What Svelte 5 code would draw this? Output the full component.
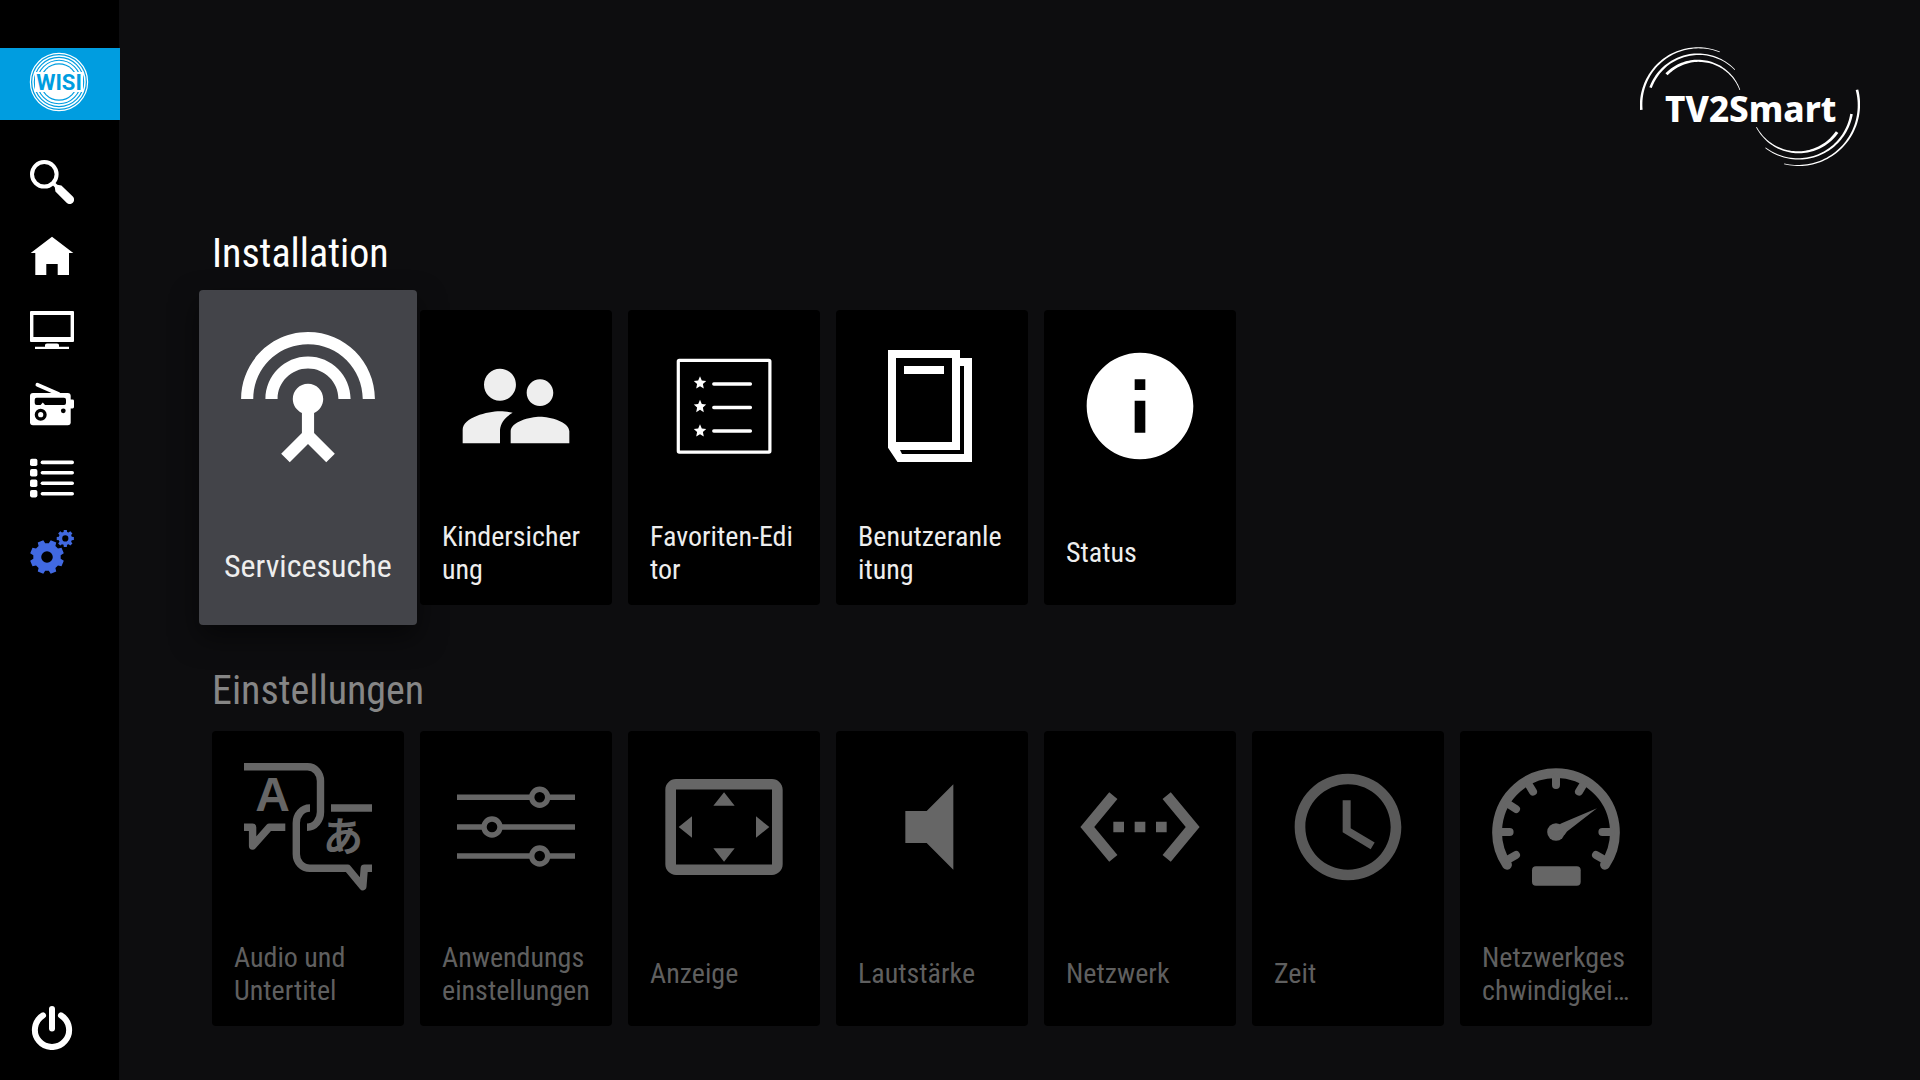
<script lang="ts">
  type Shape = {
    d?: string;
    box?: number;
  };

  type Tile = {
    id: string;
    label: string;
    focused?: boolean;
    soft?: boolean;
    icon?: Shape;
  };

  const installation: Tile[] = [
    {
      id: 'scan',
      label: 'Servicesuche',
      focused: true,
      icon: {
        d: 'M12 5c-3.87 0-7 3.13-7 7h2c0-2.76 2.24-5 5-5s5 2.24 5 5h2c0-3.87-3.13-7-7-7zm1 9.29c.88-.39 1.5-1.26 1.5-2.29 0-1.38-1.12-2.5-2.5-2.5S9.5 10.62 9.5 12c0 1.02.62 1.9 1.5 2.29v3.3L7.59 21 9 22.41l3-3 3 3L16.41 21 13 17.59v-3.3zM12 1C5.93 1 1 5.93 1 12h2c0-4.97 4.03-9 9-9s9 4.03 9 9h2c0-6.07-4.93-11-11-11z',
      },
    },
    {
      id: 'parental',
      label: 'Kindersicher\nung',
      soft: true,
      icon: {
        d: 'M16.5 12c1.38 0 2.49-1.12 2.49-2.5S17.88 7 16.5 7C15.12 7 14 8.12 14 9.5s1.12 2.5 2.5 2.5zM9 11c1.66 0 2.99-1.34 2.99-3S10.66 5 9 5C7.34 5 6 6.34 6 8s1.34 3 3 3zm7.5 3c-1.83 0-5.5.92-5.5 2.75V19h11v-2.25c0-1.83-3.67-2.75-5.5-2.75zM9 13c-2.33 0-7 1.17-7 3.5V19h7v-2.25c0-.85.33-2.34 2.37-3.47C10.5 13.1 9.66 13 9 13z',
      },
    },
    { id: 'favorites', label: 'Favoriten-Edi\ntor' },
    {
      id: 'manual',
      label: 'Benutzeranle\nitung',
      icon: {
        box: 128,
        d: 'M20 8H92V16H104V120H29.5L20 105.7ZM28 16V100H84V16ZM92 24V108H32L34 112H96V24ZM36 24H76V32H36Z',
      },
    },
    {
      id: 'status',
      label: 'Status',
      icon: {
        d: 'M12 2C6.48 2 2 6.48 2 12s4.48 10 10 10 10-4.48 10-10S17.52 2 12 2zm1 15h-2v-6h2v6zm0-8h-2V7h2v2z',
      },
    },
  ];

  const einstellungen: Tile[] = [
    { id: 'audio', label: 'Audio und\nUntertitel' },
    { id: 'app', label: 'Anwendungs\neinstellungen' },
    {
      id: 'display',
      label: 'Anzeige',
      icon: {
        d: 'M12.01 5.5L10 8h4l-1.99-2.5zM18 10v4l2.5-1.99L18 10zM6 10l-2.5 2.01L6 14v-4zm8 6h-4l2.01 2.5L14 16zm7-13H3c-1.1 0-2 .9-2 2v14c0 1.1.9 2 2 2h18c1.1 0 2-.9 2-2V5c0-1.1-.9-2-2-2zm0 16.01H3V4.99h18v14.02z',
      },
    },
    {
      id: 'volume',
      label: 'Lautstärke',
      icon: { d: 'M7 9v6h4l5 5V4l-5 5H7z' },
    },
    {
      id: 'network',
      label: 'Netzwerk',
      icon: {
        d: 'M7.77 6.76L6.23 5.48.82 12l5.41 6.52 1.54-1.28L3.42 12l4.35-5.24zM7 13h2v-2H7v2zm10-2h-2v2h2v-2zm-6 2h2v-2h-2v2zm6.77-7.52l-1.54 1.28L20.58 12l-4.35 5.24 1.54 1.28L23.18 12l-5.41-6.52z',
      },
    },
    {
      id: 'time',
      label: 'Zeit',
      soft: true,
      icon: {
        d: 'M11.99 2C6.47 2 2 6.48 2 12s4.47 10 9.99 10C17.52 22 22 17.52 22 12S17.52 2 11.99 2zM12 20c-4.42 0-8-3.58-8-8s3.58-8 8-8 8 3.58 8 8-3.58 8-8 8zm.5-13H11v6l5.25 3.15.75-1.23-4.5-2.67z',
      },
    },
    { id: 'speed', label: 'Netzwerkges\nchwindigkei…' },
  ];

  const polar = (cx: number, cy: number, r: number, deg: number) => {
    const a = (deg * Math.PI) / 180;
    return `${(cx + r * Math.cos(a)).toFixed(2)} ${(cy + r * Math.sin(a)).toFixed(2)}`;
  };

  // Arc whose stroke narrows from w0 at its start to w1 at its end.
  function taper(cx: number, cy: number, r: number, a0: number, a1: number, w0: number, w1: number) {
    const steps = 48;
    const outer: string[] = [];
    const inner: string[] = [];
    for (let i = 0; i <= steps; i++) {
      const t = i / steps;
      const a = a0 + (a1 - a0) * t;
      const w = (w0 + (w1 - w0) * t) / 2;
      outer.push(polar(cx, cy, r + w, a));
      inner.unshift(polar(cx, cy, r - w, a));
    }
    return `M${outer.join('L')}L${inner.join('L')}Z`;
  }

  // Eight-toothed gear with a round hole, filled with the even-odd rule.
  function gear(cx: number, cy: number, tip: number, root: number, hole: number, turn: number) {
    const pts: string[] = [];
    for (let i = 0; i < 8; i++) {
      const a = turn + i * 45;
      pts.push(
        polar(cx, cy, root, a - 15),
        polar(cx, cy, tip, a - 10),
        polar(cx, cy, tip, a + 10),
        polar(cx, cy, root, a + 15),
      );
    }
    return (
      `M${pts.join('L')}Z` +
      `M${cx - hole} ${cy}a${hole} ${hole} 0 1 0 ${hole * 2} 0a${hole} ${hole} 0 1 0 ${-hole * 2} 0Z`
    );
  }

  const swooshes = [
    taper(58.3, 59, 57.2, 175, 292, 2.6, 0.8),
    taper(58.3, 59, 50.8, 200, 316, 2.6, 0.8),
    taper(58.3, 59, 44.2, 224, 340, 3, 0.8),
    taper(158.3, 58.9, 60.6, -14.5, 103.5, 2.6, 0.8),
    taper(158.3, 58.9, 54, 9.7, 127.5, 2.6, 0.8),
    taper(158.3, 58.9, 47.4, 35, 152, 3, 0.8),
  ];

  const gears = gear(17, 27, 17.2, 13.8, 5.8, 22.5) + gear(35.3, 8.4, 8.7, 6.7, 3.1, 0);

  const star = 'M0-6.4L1.8-2.1 6.2-1.7 2.9 1.4 3.8 6 0 3.6-3.8 6-2.9 1.4-6.2-1.7-1.8-2.1Z';
</script>

{#snippet tile(t: Tile)}
  <button class="tile" class:focused={t.focused} type="button">
    <span class="art" class:soft={t.soft}>
      {#if t.icon}
        <svg viewBox="0 0 {t.icon.box ?? 24} {t.icon.box ?? 24}" aria-hidden="true">
          <path d={t.icon.d} fill="currentColor" fill-rule={t.icon.box ? 'evenodd' : 'nonzero'} />
        </svg>
      {:else if t.id === 'favorites'}
        <svg viewBox="0 0 128 128" aria-hidden="true" fill="currentColor">
          <rect x="18.3" y="18.3" width="91.6" height="91.8" rx="1" fill="none" stroke="currentColor" stroke-width="3.2" />
          <path d={star} transform="translate(40 40.6)" />
          <path d={star} transform="translate(40 64.2)" />
          <path d={star} transform="translate(40 88.6)" />
          <path d="M53.8 42H90.4M53.8 65.5H90.4M53.8 89H90.4" stroke="currentColor" stroke-width="3.4" stroke-linecap="round" />
        </svg>
      {:else if t.id === 'audio'}
        <svg viewBox="0 0 128 128" aria-hidden="true" fill="currentColor">
          <g fill="none" stroke="currentColor" stroke-width="7.4" stroke-linejoin="round">
            <path d="M0 3.8H63.5C71 3.8 76.5 10 76.5 18V49C76.5 57 71 64.3 63 64.3" />
            <path d="M66 45C58 45 52.3 52 52.3 60V91C52.3 99 58 105.3 66 105.3H103.7L118.8 123.6L120.3 105.3H128" />
            <path d="M87 45H128" />
            <path d="M0 64.3H8.6V83L25.3 64.3H41.3" />
          </g>
          <text class="latin" x="28.5" y="48" text-anchor="middle">A</text>
          <text class="kana" x="99" y="88" text-anchor="middle">あ</text>
        </svg>
      {:else if t.id === 'app'}
        <svg viewBox="0 0 128 128" aria-hidden="true" fill="none" stroke="currentColor" stroke-width="5.4">
          <path d="M5 34.3H79.7M95.7 34.3H123M5 64H32M48 64H123M5 93H79.7M95.7 93H123" />
          <circle cx="87.7" cy="34.3" r="8" />
          <circle cx="40" cy="64" r="8" />
          <circle cx="87.7" cy="93" r="8" />
        </svg>
      {:else if t.id === 'speed'}
        <svg viewBox="0 0 128 128" aria-hidden="true" fill="currentColor">
          <g fill="none" stroke="currentColor" stroke-linecap="round">
            <path d="M15 101.8A58.9 58.9 0 1 1 113 101.8" stroke-width="9.8" />
            <path
              d="M64 14V22M37 22L41 28.6M91 22L87 28.6M17 41.5L24 46M9 69H17.6M17 96L24 92M119 69H110.4M111 96L104 92"
              stroke-width="8"
            />
          </g>
          <circle cx="64" cy="69" r="8.8" />
          <path d="M105 45.2L69 60.4Q66 62 66 68L72.5 72L75 68.6Z" />
          <rect x="40" y="103.3" width="48.7" height="19.4" rx="4" />
        </svg>
      {/if}
    </span>
    <span class="label"><span>{t.label}</span></span>
  </button>
{/snippet}

<div class="screen">
  <nav class="sidebar" aria-label="Hauptmenü">
    <a class="brand" href="#wisi" aria-label="WISI">
      <svg viewBox="0 0 60 60" aria-hidden="true">
        <g fill="none" stroke="#fff">
          <circle cx="30" cy="30" r="28.6" stroke-width="1.2" />
          <circle cx="30" cy="30" r="26" stroke-width="1.5" />
          <circle cx="30" cy="30" r="23.2" stroke-width="1.8" />
          <circle cx="30" cy="30" r="20" stroke-width="2.4" />
        </g>
        <circle cx="30" cy="30" r="17.6" fill="#fff" />
        <rect x="6" y="20" width="48" height="20" fill="#fff" />
        <text x="30" y="38" text-anchor="middle">WISI</text>
      </svg>
    </a>

    <div class="menu">
      <button type="button" aria-label="Suche">
        <svg viewBox="0 0 44 44" aria-hidden="true">
          <g fill="none" stroke="currentColor">
            <circle cx="14.3" cy="14.3" r="12.3" stroke-width="4" />
            <path d="M23 23L28 28" stroke-width="3.6" />
          </g>
          <path d="M24.8 27.2L27.2 24.8L31.4 25.4L42.8 36.6A4.3 4.3 0 0 1 36.6 42.8L25.4 31.4Z" fill="currentColor" />
        </svg>
      </button>
      <button type="button" aria-label="Start">
        <svg viewBox="0 0 44 44" aria-hidden="true" fill="currentColor">
          <path d="M22 2.7L43.3 18.9H39V41H27.7V30H16.3V41H5.3V18.9H.7Z" />
        </svg>
      </button>
      <button type="button" aria-label="TV">
        <svg viewBox="0 0 44 44" aria-hidden="true" fill="currentColor" fill-rule="evenodd">
          <path d="M1 3H43Q44 3 44 4V33Q44 34 43 34H1Q0 34 0 33V4Q0 3 1 3ZM3.4 7V29H40.6V7Z" />
          <path d="M15 38.8V37Q15 35.4 17 35.4H27Q29 35.4 29 37V38.8H39V41H5V38.8Z" />
        </svg>
      </button>
      <button type="button" aria-label="Radio">
        <svg viewBox="0 0 44 44" aria-hidden="true" fill="currentColor">
          <path d="M7.4 2.8L28.6 12" stroke="currentColor" stroke-width="3.8" stroke-linecap="round" />
          <rect y="11" width="40.7" height="32.2" rx="3" />
          <rect x="38" y="17.4" width="6" height="9" rx="1.4" />
          <path d="M6.7 15.7H34Q36 15.7 36 17.7V21Q36 23 34 23H15L12.8 20.6 10.6 23H6.7Q4.7 23 4.7 21V17.7Q4.7 15.7 6.7 15.7Z" fill="#000" />
          <circle cx="10.7" cy="32.7" r="4.3" fill="none" stroke="#000" stroke-width="3.4" />
          <circle cx="33.3" cy="28.8" r="2.4" fill="#000" />
        </svg>
      </button>
      <button type="button" aria-label="Liste">
        <svg viewBox="0 0 44 44" aria-hidden="true" fill="currentColor">
          {#each [6.4, 16.8, 27.3, 37.7] as y}
            <rect x="0" y={y - 3.7} width="7.4" height="7.4" rx="1.8" />
            <rect x="10.6" y={y - 1.8} width="33.4" height="3.6" rx="1.8" />
          {/each}
        </svg>
      </button>
      <button type="button" class="active" aria-label="Einstellungen" aria-current="page">
        <svg viewBox="0 0 44 44" aria-hidden="true">
          <path d={gears} fill="currentColor" fill-rule="evenodd" />
        </svg>
      </button>
      <button type="button" class="power" aria-label="Ausschalten">
        <svg viewBox="0 0 44 44" aria-hidden="true" fill="none" stroke="currentColor" stroke-width="6" stroke-linecap="round">
          <path d="M22 3V22.4M13 9.4A17.1 17.1 0 1 0 31 9.4" />
        </svg>
      </button>
    </div>
  </nav>

  <main>
    <header>
      <svg class="logo" viewBox="0 0 220 122" role="img" aria-label="TV2Smart">
        {#each swooshes as d}
          <path {d} fill="#fff" />
        {/each}
        <text x="25" y="76">TV2Smart</text>
      </svg>
    </header>

    <section class="current">
      <h2>Installation</h2>
      <div class="row">
        {#each installation as t (t.id)}
          {@render tile(t)}
        {/each}
      </div>
    </section>

    <section class="dimmed">
      <h2>Einstellungen</h2>
      <div class="row">
        {#each einstellungen as t (t.id)}
          {@render tile(t)}
        {/each}
      </div>
    </section>
  </main>
</div>

<style>
  :global(body) {
    background: #0d0d0f;
  }

  .screen {
    display: flex;
    min-height: 100vh;
    box-sizing: border-box;
    background: #0d0d0f;
    color: #fff;
    font-family: 'Roboto Condensed', 'Liberation Sans Narrow', Roboto, sans-serif;
  }

  button {
    border: 0;
    padding: 0;
    margin: 0;
    background: none;
    color: inherit;
    font: inherit;
    text-align: left;
    cursor: pointer;
  }

  svg {
    display: block;
  }

  .sidebar {
    flex: 0 0 119px;
    min-width: 0;
    display: flex;
    flex-direction: column;
    box-sizing: border-box;
    padding: 48px 0 30px;
    background: #000;
  }

  .brand {
    display: flex;
    align-items: center;
    box-sizing: border-box;
    width: 120px;
    height: 72px;
    padding: 0 0 4px 29px;
    background: #009de0;
  }

  .brand svg {
    width: 60px;
    height: 60px;
  }

  .brand text {
    font: 700 22px Roboto, sans-serif;
    fill: #009de0;
  }

  .menu {
    flex: 1;
    display: flex;
    flex-direction: column;
    gap: 30px;
    padding: 40px 0 0 30px;
  }

  .menu button,
  .menu svg {
    width: 44px;
    height: 44px;
  }

  .menu .active {
    color: #4169e1;
  }

  .menu .power {
    margin-top: auto;
  }

  main {
    flex: 1;
    min-width: 0;
    padding: 46px 60px 48px 93px;
  }

  header {
    display: flex;
    justify-content: flex-end;
    margin-bottom: 62px;
  }

  .logo {
    width: 220px;
    height: 122px;
  }

  .logo text {
    font: 800 35px 'Noto Sans', sans-serif;
    fill: #fff;
  }

  h2 {
    margin: 0 0 16px;
    font-size: 40px;
    line-height: 48px;
    font-weight: 400;
  }

  .current h2 {
    margin-bottom: 32px;
  }

  .dimmed {
    margin-top: 62px;
    color: #666;
  }

  .dimmed h2 {
    color: #868686;
  }

  .row {
    display: flex;
    flex-wrap: wrap;
    gap: 16px;
  }

  .tile {
    display: flex;
    flex-direction: column;
    width: 192px;
    border-radius: 4px;
    background: #000;
  }

  .art {
    display: flex;
    align-items: center;
    justify-content: center;
    width: 100%;
    height: 192px;
  }

  .art svg {
    width: 128px;
    height: 128px;
  }

  .art.soft {
    color: #eee;
  }

  .dimmed .art.soft {
    color: #595959;
  }

  .label {
    display: flex;
    align-items: center;
    box-sizing: border-box;
    height: 103px;
    padding: 0 0 2px 22px;
    font-size: 28px;
    line-height: 33px;
    white-space: pre;
    color: #eee;
  }

  .dimmed .label {
    color: #5f5f5f;
  }

  .tile.focused {
    position: relative;
    z-index: 1;
    width: 218px;
    margin: -20px -13px;
    background: #434449;
    box-shadow: 0 12px 28px rgb(0 0 0 / 0.5);
  }

  .focused .art {
    height: 218px;
  }

  .focused .art svg {
    width: 146px;
    height: 146px;
  }

  .focused .label {
    height: 117px;
    padding: 0 0 0 25px;
    font-size: 32px;
  }

  .latin {
    font: 700 48px 'Liberation Sans', sans-serif;
  }

  .kana {
    font: 700 40px 'Noto Sans CJK JP', sans-serif;
  }
</style>
